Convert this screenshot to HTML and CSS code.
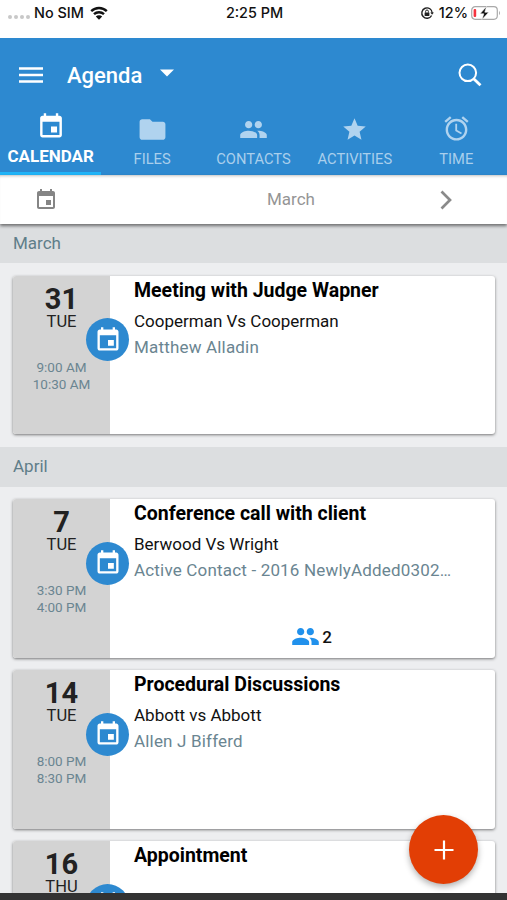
FILE: index.html
```html
<!DOCTYPE html>
<html lang="en">
<head>
    <meta charset="UTF-8">
    <meta name="viewport" content="width=device-width, initial-scale=1.0">
    <title>Agenda</title>
    <link rel="stylesheet" href="styles.css">
</head>
<body>
    <!-- Shared icons -->
    <svg class="icon-defs" aria-hidden="true">
        <symbol id="icon-event" viewBox="0 0 24 24">
            <path d="M17 12h-5v5h5v-5zM16 1v2H8V1H6v2H5c-1.11 0-1.99.9-1.99 2L3 19c0 1.1.89 2 2 2h14c1.1 0 2-.9 2-2V5c0-1.1-.9-2-2-2h-1V1h-2zm3 18H5V8h14v11z"/>
        </symbol>
        <symbol id="icon-people" viewBox="0 0 24 24">
            <path d="M16 11c1.66 0 2.99-1.34 2.99-3S17.66 5 16 5c-1.66 0-3 1.34-3 3s1.34 3 3 3zm-8 0c1.66 0 2.99-1.34 2.99-3S9.66 5 8 5C6.34 5 5 6.34 5 8s1.34 3 3 3zm0 2c-2.33 0-7 1.17-7 3.5V19h14v-2.5c0-2.33-4.67-3.5-7-3.5zm8 0c-.29 0-.62.02-.97.05 1.16.84 1.97 1.97 1.97 3.45V19h6v-2.5c0-2.33-4.67-3.5-7-3.5z"/>
        </symbol>
    </svg>

    <div class="phone">
        <!-- Status bar -->
        <div class="status-bar">
            <div class="status-left">
                <span class="signal"><i></i><i></i><i></i><i></i></span>
                <span>No SIM</span>
                <svg class="wifi" viewBox="0 0 18 14">
                    <path d="M1.2 5.2a11.2 11.2 0 0 1 15.6 0M4 8.2a7.2 7.2 0 0 1 10 0" fill="none" stroke="#111" stroke-width="2.4"/>
                    <path d="M9 13.8L5.8 10.5a4.6 4.6 0 0 1 6.4 0z" fill="#111"/>
                </svg>
            </div>
            <span class="status-time">2:25 PM</span>
            <div class="status-right">
                <svg class="lock" viewBox="0 0 14 14">
                    <path d="M11.6 9.5a5.2 5.2 0 1 1 .6-2.5" fill="none" stroke="#222" stroke-width="1.4"/>
                    <path d="M10.3 6.5h3.6l-1.8 2.3z" fill="#222"/>
                    <rect x="4.6" y="6.4" width="4.8" height="3.5" rx=".4" fill="#222"/>
                    <path d="M5.6 6.6V5.4a1.4 1.4 0 0 1 2.8 0v1.2" fill="none" stroke="#222"/>
                </svg>
                <span>12%</span>
                <svg class="battery" viewBox="0 0 30 16">
                    <rect x=".7" y="1.7" width="25.6" height="12.6" rx="3.5" fill="none" stroke="#a9a9a9" stroke-width="1.2"/>
                    <rect x="2.6" y="4" width="2.6" height="8" rx="1" fill="#f5333f"/>
                    <path d="M28 6v4c1.3-.6 1.3-3.4 0-4z" fill="#a9a9a9"/>
                    <path d="M15.5 1.5L9 8.8h3.8L11 14.5l6.8-7.3h-4z" fill="#111" stroke="#fff" stroke-width=".6"/>
                </svg>
            </div>
        </div>

        <!-- Header and tabs -->
        <header class="header">
            <div class="toolbar">
                <svg class="menu" viewBox="0 0 24 16"><path d="M0 1.5h24M0 8h24M0 14.5h24" stroke="#fff" stroke-width="2.3"/></svg>
                <h1>Agenda</h1>
                <svg class="caret" viewBox="0 0 14 8"><path d="M0 .5h14L7 7.5z" fill="#fff"/></svg>
                <svg class="search" viewBox="0 0 24 24">
                    <circle cx="9.8" cy="9.8" r="8.3" fill="none" stroke="#fff" stroke-width="2"/>
                    <path d="M15.9 15.9l6.6 6.4" stroke="#fff" stroke-width="2.8"/>
                </svg>
            </div>
            <nav class="tabs">
                <div class="tab active">
                    <svg class="tab-event"><use href="#icon-event"/></svg>
                    <span>CALENDAR</span>
                </div>
                <div class="tab">
                    <svg class="tab-folder" viewBox="0 0 24 24"><path d="M10 4H4c-1.1 0-1.99.9-1.99 2L2 18c0 1.1.9 2 2 2h16c1.1 0 2-.9 2-2V8c0-1.1-.9-2-2-2h-8l-2-2z"/></svg>
                    <span>FILES</span>
                </div>
                <div class="tab">
                    <svg class="tab-people"><use href="#icon-people"/></svg>
                    <span>CONTACTS</span>
                </div>
                <div class="tab">
                    <svg class="tab-star" viewBox="0 0 24 24"><path d="M12 17.27L18.18 21l-1.64-7.03L22 9.24l-7.19-.61L12 2 9.19 8.63 2 9.24l5.46 4.73L5.82 21z"/></svg>
                    <span>ACTIVITIES</span>
                </div>
                <div class="tab">
                    <svg class="tab-alarm" viewBox="0 0 24 24"><path d="M22 5.72l-4.6-3.86-1.29 1.53 4.6 3.86L22 5.72zM7.88 3.39L6.6 1.86 2 5.71l1.29 1.53 4.59-3.85zM12.5 8H11v6l4.75 2.85.75-1.23-4-2.37V8zM12 4c-4.97 0-9 4.03-9 9s4.02 9 9 9c4.97 0 9-4.03 9-9s-4.03-9-9-9zm0 16c-3.87 0-7-3.13-7-7s3.13-7 7-7 7 3.13 7 7-3.13 7-7 7z"/></svg>
                    <span>TIME</span>
                </div>
            </nav>
        </header>

        <!-- Month selector -->
        <div class="month-bar">
            <svg class="month-icon"><use href="#icon-event"/></svg>
            <span>March</span>
            <svg class="next" viewBox="0 0 12 20"><path d="M1.5 1.5L10 10l-8.5 8.5" fill="none" stroke="#8a8a8a" stroke-width="2.7"/></svg>
        </div>

        <!-- Events -->
        <main class="agenda">
            <h2 class="first">March</h2>
            <div class="events">
                <article class="card">
                    <div class="date">
                        <span class="day">31</span>
                        <span class="weekday">TUE</span>
                        <span class="hours">9:00 AM<br>10:30 AM</span>
                        <span class="badge"><svg><use href="#icon-event"/></svg></span>
                    </div>
                    <div class="details">
                        <h3>Meeting with Judge Wapner</h3>
                        <p class="matter">Cooperman Vs Cooperman</p>
                        <p class="contact">Matthew Alladin</p>
                    </div>
                </article>
            </div>

            <h2>April</h2>
            <div class="events">
                <article class="card">
                    <div class="date">
                        <span class="day">7</span>
                        <span class="weekday">TUE</span>
                        <span class="hours">3:30 PM<br>4:00 PM</span>
                        <span class="badge"><svg><use href="#icon-event"/></svg></span>
                    </div>
                    <div class="details">
                        <h3>Conference call with client</h3>
                        <p class="matter">Berwood Vs Wright</p>
                        <p class="contact">Active Contact - 2016 NewlyAdded0302…</p>
                        <div class="guests"><svg><use href="#icon-people"/></svg>2</div>
                    </div>
                </article>
                <article class="card">
                    <div class="date">
                        <span class="day">14</span>
                        <span class="weekday">TUE</span>
                        <span class="hours">8:00 PM<br>8:30 PM</span>
                        <span class="badge"><svg><use href="#icon-event"/></svg></span>
                    </div>
                    <div class="details">
                        <h3>Procedural Discussions</h3>
                        <p class="matter">Abbott vs Abbott</p>
                        <p class="contact">Allen J Bifferd</p>
                    </div>
                </article>
                <article class="card">
                    <div class="date">
                        <span class="day">16</span>
                        <span class="weekday">THU</span>
                        <span class="badge"><svg><use href="#icon-event"/></svg></span>
                    </div>
                    <div class="details">
                        <h3>Appointment</h3>
                    </div>
                </article>
            </div>
        </main>

        <div class="bottom-bar"></div>
        <button class="add" aria-label="Add event">
            <svg viewBox="0 0 20 20"><path d="M10 .5v19M.5 10h19" stroke="#fff" stroke-width="2.2"/></svg>
        </button>
    </div>
</body>
</html>
```

FILE: styles.css
```css
* {
    box-sizing: border-box;
}

body {
    margin: 0;
    font-family: Roboto, Arial, sans-serif;
    color: #111;
}

h1, h2, h3, p {
    margin: 0;
}

svg {
    display: block;
    flex-shrink: 0;
}

.icon-defs {
    position: absolute;
    width: 0;
    height: 0;
}

.phone {
    position: relative;
    display: flex;
    flex-direction: column;
    width: 507px;
    height: 900px;
    overflow: hidden;
    background-color: #edeef0;
}

/* Status bar */
.status-bar {
    display: grid;
    grid-template-columns: 1fr auto 1fr;
    flex-shrink: 0;
    height: 38px;
    padding: 3px 6px 0 8px;
    background-color: #fff;
    font-family: Inter, Arial, sans-serif;
    font-size: 14.4px;
    font-weight: 500;
    line-height: 20px;
}

.status-left,
.status-right {
    display: flex;
    align-items: center;
    height: 20px;
}

.status-right {
    justify-content: flex-end;
}

.signal {
    display: flex;
    gap: 2px;
    margin: 8px 4px 0 0;
}

.signal i {
    width: 4px;
    height: 4px;
    border-radius: 50%;
    background-color: #c8c8c8;
}

.wifi {
    width: 18px;
    height: 14px;
    margin-left: 6px;
}

.lock {
    width: 14px;
    height: 14px;
    margin-right: 5px;
}

.battery {
    width: 30px;
    height: 16px;
    margin-left: 3px;
}

/* Header */
.header {
    flex-shrink: 0;
    height: 137px;
    background-color: #2d89d0;
    color: #fff;
}

.toolbar {
    display: flex;
    align-items: center;
    height: 74px;
    padding: 0 25px 0 19px;
}

.menu {
    width: 24px;
    height: 16px;
}

.toolbar h1 {
    margin-left: 24px;
    font-size: 22px;
    font-weight: 500;
}

.caret {
    width: 14px;
    height: 8px;
    margin: 0 auto 5px 18px;
}

.search {
    width: 24px;
    height: 24px;
}

.tabs {
    display: grid;
    grid-template-columns: repeat(5, 1fr);
    height: 63px;
}

.tab {
    display: flex;
    flex-direction: column;
    align-items: center;
    justify-content: space-between;
    padding-bottom: 7px;
    color: #a9cfec;
    font-size: 14.7px;
    line-height: 18px;
}

.tab svg {
    fill: #b0d3ef;
}

.tab.active {
    border-bottom: 3px solid #20b4f8;
    color: #fff;
    font-size: 17px;
    font-weight: 700;
}

.tab.active svg {
    fill: #fff;
}

.tab-event {
    width: 30px;
    height: 29px;
}

.tab-folder {
    width: 31px;
    height: 31px;
    margin-top: 2px;
}

.tab-people {
    width: 29px;
    height: 29px;
    margin-top: 3px;
}

.tab-star {
    width: 27px;
    height: 27px;
    margin-top: 4px;
}

.tab-alarm {
    width: 29px;
    height: 29px;
    margin-top: 2px;
}

/* Month selector */
.month-bar {
    position: relative;
    display: flex;
    align-items: center;
    flex-shrink: 0;
    height: 49px;
    padding: 0 55px 0 34px;
    background-color: #fff;
    box-shadow: inset 0 3px 3px -2px rgba(0, 0, 0, 0.25), 0 2px 3px rgba(0, 0, 0, 0.5);
    color: #959595;
    font-size: 17px;
}

.month-bar span {
    flex: 1;
    padding: 0 0 2px 84px;
    text-align: center;
}

.month-icon {
    width: 24px;
    height: 24px;
    fill: #858585;
}

.next {
    width: 12px;
    height: 20px;
}

/* Agenda list */
.agenda {
    flex: 1;
    min-height: 0;
    overflow: hidden;
}

.agenda h2 {
    height: 40px;
    padding-left: 13px;
    background-color: #dcdee0;
    color: #5f7d89;
    font-size: 17px;
    font-weight: 400;
    line-height: 39px;
}

.agenda h2.first {
    height: 39px;
    line-height: 38px;
}

.events {
    display: flex;
    flex-direction: column;
    gap: 12.5px;
    padding: 12.5px 12px 12.5px 13px;
}

.card {
    display: flex;
    height: 158.5px;
    border-radius: 3px;
    background-color: #fff;
    box-shadow: 0 1px 3px rgba(0, 0, 0, 0.5);
}

.date {
    position: relative;
    display: flex;
    flex-direction: column;
    align-items: center;
    width: 97px;
    padding-top: 9px;
    border-radius: 3px 0 0 3px;
    background-color: #d3d3d3;
    color: #222;
}

.day {
    font-size: 29px;
    font-weight: 700;
    line-height: 29px;
}

.weekday {
    font-size: 16.5px;
    line-height: 16px;
}

.hours {
    margin-top: 29px;
    color: #6a8591;
    font-size: 13.5px;
    line-height: 17px;
    text-align: center;
}

/* Round icon sits on the edge of the date column */
.badge {
    position: absolute;
    top: 42.5px;
    right: -19px;
    display: flex;
    align-items: center;
    justify-content: center;
    width: 43px;
    height: 43px;
    border-radius: 50%;
    background-color: #2d89d0;
}

.badge svg {
    width: 28px;
    height: 28px;
    fill: #fff;
}

.details {
    flex: 1;
    padding: 3px 0 0 24px;
    font-size: 17px;
    white-space: nowrap;
}

.details h3 {
    color: #000;
    font-size: 19.5px;
    font-weight: 700;
    line-height: 24px;
}

.matter {
    margin-top: 5px;
    line-height: 26px;
}

.contact {
    color: #6a8591;
    letter-spacing: 0.18px;
    line-height: 27px;
}

.guests {
    display: flex;
    align-items: center;
    justify-content: center;
    gap: 2px;
    margin-top: 38px;
    padding-right: 6px;
    font-weight: 500;
    line-height: 28px;
}

.guests svg {
    width: 29px;
    height: 29px;
    fill: #2191ec;
}

.bottom-bar {
    flex-shrink: 0;
    height: 7px;
    background-color: #333;
}

/* Floating button */
.add {
    position: absolute;
    right: 29px;
    bottom: 16px;
    display: flex;
    align-items: center;
    justify-content: center;
    width: 69px;
    height: 69px;
    padding: 0;
    border: none;
    border-radius: 50%;
    background-color: #e23e05;
    box-shadow: 0 3px 6px rgba(0, 0, 0, 0.3);
}

.add svg {
    width: 20px;
    height: 20px;
}
```
